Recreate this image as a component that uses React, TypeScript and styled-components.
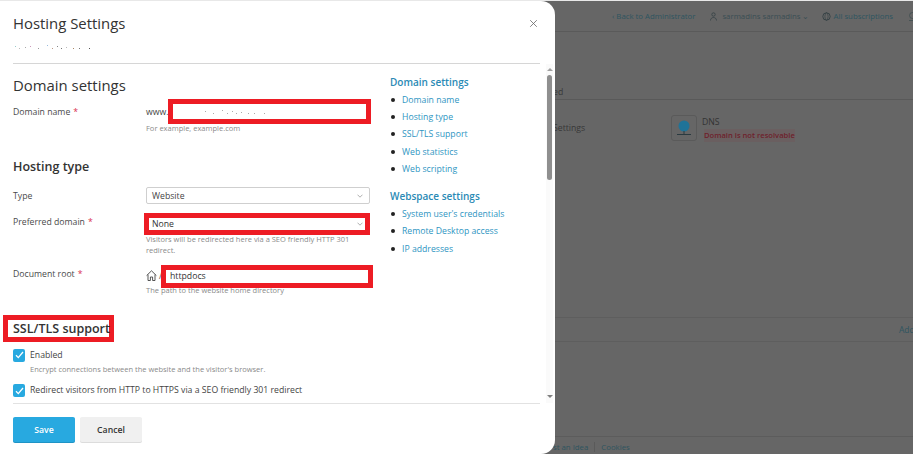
import React from "react";
import styled, { createGlobalStyle } from "styled-components";

const Global = createGlobalStyle`
  html, body { margin: 0; padding: 0; width: 913px; height: 454px; overflow: hidden; background: #666; }
  body { font-family: "Open Sans", "Liberation Sans", sans-serif; color: #222; }
  * { box-sizing: border-box; }
`;

const Viewport = styled.div`
  position: relative; width: 913px; height: 454px; overflow: hidden; background: #666666;
  padding-top: 1px;
`;
const TopEdge = styled.div`height: 1px; background: #e8e8e8; position: absolute; left: 0; right: 0; top: 0;`;

/* dimmed page behind the drawer */
const BackPage = styled.div`
  width: 913px; height: 453px; display: flex; flex-direction: column; color: #333; font-size: 8px;
`;
const BackHeader = styled.div`
  height: 31px; border-bottom: 1px solid #5a5a5a; display: flex; align-items: center; padding-left: 612px; gap: 15px;
  white-space: nowrap; overflow: hidden; flex: none;
`;
const BackLink = styled.span<{ $gap?: number }>`
  color: #2e5560; font-size: 7.8px; display: inline-flex; align-items: center; gap: ${p => p.$gap ?? 5}px; flex: none;
`;
const BackMuted = styled(BackLink)`color: #3a4e54; margin-right: -3px;`;
const BackIcon = styled.svg`display: block; flex: none;`;
const BackTabs = styled.div`
  height: 68px; flex: none; border-bottom: 1px solid #595959; display: flex; align-items: flex-end;
  padding: 0 0 1px 553px; font-size: 8.7px; color: #383838;
`;
const BackRow = styled.div`
  flex: none; height: 218px; display: flex; padding: 15px 0 0 553px; gap: 86px; border-bottom: 1px solid #5e5e5e;
`;
const BackRowLabel = styled.span`font-size: 8.7px; color: #383838; margin-top: 7px; flex: none; width: 32px; white-space: nowrap;`;
const DnsTile = styled.div`
  width: 26px; height: 26px; border: 1px solid #5a5a5a; border-radius: 3px; display: flex; align-items: center; justify-content: center;
`;
const DnsBlock = styled.div`display: flex; gap: 5px;`;
const DnsText = styled.div`
  display: flex; flex-direction: column; font-size: 8.7px; color: #333; line-height: 13px; align-items: flex-start; padding-top: 1px;
`;
const DnsError = styled.span`color: #6e1f2c; font-weight: 600; font-size: 7.6px; margin-left: 2px; background: #6a5f60;`;
const BackBar = styled.div`
  height: 24px; flex: none; border-bottom: 1px solid #5e5e5e; display: flex; align-items: center;
  padding-left: 899px; font-size: 8.5px; color: #2e5560; overflow: hidden; white-space: nowrap;
`;
const BackBody = styled.div`flex: 1;`;
const BackFooter = styled.div`
  height: 18px; flex: none; border-top: 1px solid #5c5c5c; display: flex; align-items: center; gap: 6px; padding: 2px 0 0 553px;
  font-size: 7.8px; color: #2e5560; white-space: nowrap;
`;
const FooterSep = styled.span`width: 1px; height: 10px; background: #5a5a5a;`;

/* drawer */
const Drawer = styled.div`
  position: absolute; left: 0; top: 1px; width: 555px; height: 453px; background: #fff;
  border-radius: 0 14px 14px 0; display: flex; flex-direction: column;
`;
const DrawerHead = styled.header`
  height: 63px; flex: none; margin: 0 0 0 13px; width: 527px; border-bottom: 1px solid #d6d6d6; padding-top: 13px; position: relative;
`;
const Title = styled.h1`margin: 0; font-size: 14.9px; line-height: 19px; font-weight: 400; color: #333;`;
const Close = styled.button`
  position: absolute; right: 2px; top: 18px; width: 9px; height: 9px; padding: 0; border: 0; background: none; display: block;
`;
const CloseIcon = styled.svg`display: block;`;
const Specks = styled.svg`display: block;`;
const SubSpecks = styled(Specks)`margin-top: 10px;`;

const Middle = styled.div`flex: 1; min-height: 0; display: flex; position: relative;`;
const Scroller = styled.div`
  flex: 1; min-width: 0; overflow: hidden; display: flex; padding: 11px 0 0 13px; gap: 20px;
`;
const Form = styled.div`width: 357px; flex: none;`;
const H2 = styled.h2`margin: 0 0 8px; font-size: 14.9px; line-height: 20px; font-weight: 400; color: #333;`;
const H3 = styled.h3`margin: 25px 0 12.5px; font-size: 12.5px; line-height: 16px; font-weight: 600; color: #333;`;
const Row = styled.div`display: flex; & + & { margin-top: 9px; }`;
const Label = styled.div`
  width: 133px; flex: none; font-size: 8.7px; line-height: 14px; color: #4a4a4a; padding-top: 2px;
`;
const Req = styled.span`color: #d9304f; margin-left: 3px;`;
const Field = styled.div`flex: 1; min-width: 0;`;
const Hint = styled.div<{ $mt?: number }>`
  font-size: 7.5px; line-height: 11px; color: #8a8a8a; margin-top: ${p => p.$mt ?? -1.5}px;
`;
const InlineField = styled.div`display: flex; align-items: flex-start; font-size: 8.7px; color: #333;`;
const Prefix = styled.span`width: 22px; flex: none; line-height: 14px; padding-top: 2px; font-weight: 500; color: #444;`;
const RedBox = styled.div<{ $w: number; $h: number; $ml?: number; $mt?: number; $pl?: number }>`
  width: ${p => p.$w}px; height: ${p => p.$h}px; border: 5px solid #ed1c24; background: #fff; flex: none;
  margin-left: ${p => p.$ml ?? 0}px; margin-top: ${p => p.$mt ?? 0}px; padding-left: ${p => p.$pl ?? 0}px;
  display: flex; align-items: center; position: relative; font-size: 8.7px; color: #333;
`;
const Select = styled.div`
  width: 224px; height: 17px; border: 1px solid #cfcfcf; border-bottom-width: 1.5px; border-radius: 2px; background: #fff; display: flex; align-items: center;
  justify-content: space-between; padding: 0 6px 0 5px; font-size: 8.7px; color: #444;
`;
const Chevron = styled.svg`flex: none; display: block;`;
const SelectInner = styled.div`
  width: 100%; display: flex; align-items: center; justify-content: space-between; padding: 0 2px 0 3px;
`;
const HomeIcon = styled.svg`flex: none; display: block; margin-top: 5px;`;
const Slash = styled.span`flex: none; width: 0; line-height: 14px; margin: 4px 0 0 2px; color: #555;`;
const SslHeading = styled.h3`
  display: block; margin: 18.5px 0 7px -10px; border: 5px solid #ed1c24; padding: 1.5px 0 0 5px;
  font-size: 12.5px; line-height: 15px; font-weight: 600; color: #333; height: 27px; width: 111px; white-space: nowrap;
`;
const CheckRow = styled.div`display: flex; gap: 5px; align-items: flex-start;`;
const CheckBox = styled.span`
  width: 12px; height: 13px; flex: none; background: #28a9e0; border-radius: 2px; display: flex; align-items: center; justify-content: center;
`;
const CheckText = styled.div`font-size: 8.7px; line-height: 12px; color: #444;`;
const CheckHint = styled.div`font-size: 7.5px; line-height: 11px; color: #8a8a8a; margin: 2px 0 9.5px 17px;`;

const Side = styled.nav`width: 160px; flex: none;`;
const SideTitle = styled.div<{ $gap?: number }>`
  font-size: 10px; line-height: 14px; font-weight: 600; color: #2a8ab5; margin-top: ${p => p.$gap ?? 0}px;
`;
const SideList = styled.ul`margin: 2px 0 0; padding: 0; list-style: none;`;
const SideItem = styled.li`
  display: flex; align-items: center; gap: 7px; height: 17.3px; font-size: 8.7px; color: #2e95c2;
  &::before { content: ""; width: 4px; height: 4px; border-radius: 50%; background: #222; margin-left: 1px; }
`;

const ScrollTrack = styled.div`
  width: 7px; margin: 0 2px 0 0; background: #fafafa; flex: none; position: relative; display: flex; flex-direction: column;
  align-items: center; justify-content: space-between; padding: 4px 0 5px;
`;
const Arrow = styled.span<{ $up?: boolean }>`
  width: 0; height: 0; border-left: 3px solid transparent; border-right: 3px solid transparent;
  ${p => (p.$up ? "border-bottom: 3px solid #a0a0a0;" : "border-top: 3px solid #808080;")}
`;
const Thumb = styled.div`
  position: absolute; top: 11px; left: 1px; width: 5px; height: 105px; border-radius: 3px; background: #8f8f8f;
`;

const Footer = styled.footer`
  flex: none; height: 51px; margin-left: 13px; width: 527px; border-top: 1px solid #e2e2e2; padding-top: 13px; display: flex; gap: 5px;
`;
const Btn = styled.button<{ $primary?: boolean }>`
  width: 62px; height: 25px; border: 0; border-radius: 2px; padding: 0;
  font-family: inherit; font-size: 8.7px; font-weight: 600;
  background: ${p => (p.$primary ? "#28a9e0" : "#f0f0f0")};
  color: ${p => (p.$primary ? "#fff" : "#333")};
  box-shadow: 0 1px 0 ${p => (p.$primary ? "#1f93c5" : "#dcdcdc")};
`;

const Check = () => (
  <svg width="9" height="8" viewBox="0 0 9 8" fill="none">
    <path d="M1 4.2 3.3 6.6 8 1" stroke="#fff" strokeWidth="1.3" />
  </svg>
);
const Chev = () => (
  <Chevron width="6" height="4" viewBox="0 0 6 4" fill="none">
    <path d="M.5.7 3 3.2 5.5.7" stroke="#9a9a9a" strokeWidth=".8" />
  </Chevron>
);
const Home = () => (
  <HomeIcon width="11" height="11" viewBox="0 0 11 11" fill="none">
    <path d="M.6 5.6 5.5.8l4.9 4.8M2 4.6v5.9h2.4V7h2.2v3.5H9V4.6" stroke="#444" strokeWidth=".9" />
  </HomeIcon>
);

const specks: [number, number, string][] = [
  [2, 3, "#9cc"], [6, 5, "#bbb"], [12, 4, "#aaa"], [17, 3, "#c9b"], [25, 5, "#999"], [34, 2, "#9bd"],
  [39, 5, "#b98"], [44, 3, "#888"], [48, 5, "#777"], [53, 4, "#bbb"], [60, 5, "#a86"], [66, 5, "#777"], [76, 5, "#555"],
];

export default function App() {
  return (
    <Viewport>
      <Global />
      <TopEdge />
      <BackPage aria-hidden>
        <BackHeader>
          <BackLink>‹ Back to Administrator</BackLink>
          <BackMuted>
            <BackIcon width="7" height="9" viewBox="0 0 7 9" fill="none"><circle cx="3.5" cy="2.5" r="1.7" stroke="#2e3c40" strokeWidth=".7" /><path d="M.5 8.5c0-4 6-4 6 0" stroke="#2e3c40" strokeWidth=".7" /></BackIcon>
            sarmadins sarmadins ⌄
          </BackMuted>
          <BackLink $gap={3}>
            <BackIcon width="9" height="9" viewBox="0 0 9 9" fill="none"><circle cx="4.5" cy="4.5" r="3.7" stroke="#2e3c40" strokeWidth=".8" /><ellipse cx="4.5" cy="4.5" rx="1.6" ry="3.7" stroke="#2e3c40" strokeWidth=".6" /></BackIcon>
            All subscriptions
          </BackLink>
          <BackIcon width="9" height="9" viewBox="0 0 9 9" fill="none"><circle cx="4.5" cy="3.5" r="3" stroke="#3a4a4e" strokeWidth=".7" /><path d="M1 8.5h7" stroke="#3a4a4e" strokeWidth=".7" /></BackIcon>
        </BackHeader>
        <BackTabs>ed</BackTabs>
        <BackRow>
          <BackRowLabel>Settings</BackRowLabel>
          <DnsBlock>
            <DnsTile>
              <svg width="18" height="18" viewBox="0 0 18 18"><circle cx="9" cy="7" r="5.5" fill="#1f7398" /><path d="M9 12v3M2 15.5h14" stroke="#2a3a40" strokeWidth="1" /></svg>
            </DnsTile>
            <DnsText>
              <span>DNS</span>
              <DnsError>Domain is not resolvable</DnsError>
            </DnsText>
          </DnsBlock>
        </BackRow>
        <BackBar>Add</BackBar>
        <BackBody />
        <BackFooter>st an Idea<FooterSep />Cookies</BackFooter>
      </BackPage>

      <Drawer>
        <DrawerHead>
          <Title>Hosting Settings</Title>
          <SubSpecks width="95" height="7">
            {specks.map(([x, y, c]) => <rect key={x} x={x} y={y} width="1" height="1" fill={c} />)}
          </SubSpecks>
          <Close aria-label="Close">
            <CloseIcon width="9" height="9" viewBox="0 0 9 9" fill="none"><path d="M1.2 1.2 7.8 7.8M7.8 1.2 1.2 7.8" stroke="#666" strokeWidth=".8" /></CloseIcon>
          </Close>
        </DrawerHead>
        <Middle>
          <Scroller>
            <Form>
              <H2>Domain settings</H2>
              <Row>
                <Label>Domain name<Req>*</Req></Label>
                <Field>
                  <InlineField>
                    <Prefix>www.</Prefix>
                    <RedBox $w={203} $h={25} $mt={-4}>
                      <Specks width="110" height="7">
                        {specks.slice(3).map(([x, y]) => <rect key={x} x={x + 15} y={y} width="1" height="1" fill="#aaa" />)}
                      </Specks>
                    </RedBox>
                  </InlineField>
                  <Hint>For example, example.com</Hint>
                </Field>
              </Row>
              <H3>Hosting type</H3>
              <Row>
                <Label>Type</Label>
                <Field><Select>Website<Chev /></Select></Field>
              </Row>
              <Row>
                <Label>Preferred domain<Req>*</Req></Label>
                <Field>
                  <RedBox $w={226} $h={22} $ml={-2}>
                    <SelectInner>None<Chev /></SelectInner>
                  </RedBox>
                  <Hint>Visitors will be redirected here via a SEO friendly HTTP 301 redirect.</Hint>
                </Field>
              </Row>
              <Row>
                <Label>Document root<Req>*</Req></Label>
                <Field>
                  <InlineField>
                    <Home />
                    <Slash>/</Slash>
                    <RedBox $w={212} $h={23} $ml={2} $pl={4}>httpdocs</RedBox>
                  </InlineField>
                  <Hint $mt={-2.5}>The path to the website home directory</Hint>
                </Field>
              </Row>
              <SslHeading>SSL/TLS support</SslHeading>
              <CheckRow>
                <CheckBox><Check /></CheckBox>
                <CheckText>Enabled</CheckText>
              </CheckRow>
              <CheckHint>Encrypt connections between the website and the visitor's browser.</CheckHint>
              <CheckRow>
                <CheckBox><Check /></CheckBox>
                <CheckText>Redirect visitors from HTTP to HTTPS via a SEO friendly 301 redirect</CheckText>
              </CheckRow>
            </Form>
            <Side>
              <SideTitle>Domain settings</SideTitle>
              <SideList>
                <SideItem>Domain name</SideItem>
                <SideItem>Hosting type</SideItem>
                <SideItem>SSL/TLS support</SideItem>
                <SideItem>Web statistics</SideItem>
                <SideItem>Web scripting</SideItem>
              </SideList>
              <SideTitle $gap={12}>Webspace settings</SideTitle>
              <SideList>
                <SideItem>System user's credentials</SideItem>
                <SideItem>Remote Desktop access</SideItem>
                <SideItem>IP addresses</SideItem>
              </SideList>
            </Side>
          </Scroller>
          <ScrollTrack>
            <Arrow $up />
            <Thumb />
            <Arrow />
          </ScrollTrack>
        </Middle>
        <Footer>
          <Btn $primary>Save</Btn>
          <Btn>Cancel</Btn>
        </Footer>
      </Drawer>
    </Viewport>
  );
}
